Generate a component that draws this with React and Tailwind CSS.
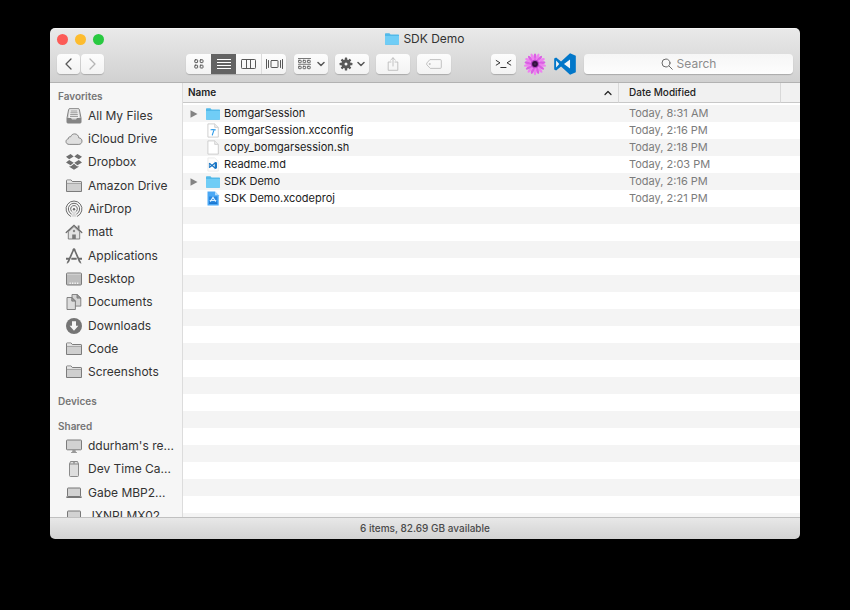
import { useState } from 'react';
import clsx from 'clsx';

const stroke = {
  fill: 'none',
  stroke: 'currentColor',
  strokeLinecap: 'round',
  strokeLinejoin: 'round',
};

function FolderLineIcon() {
  return (
    <svg viewBox="0 0 18 18" className="w-[18px] h-[18px]">
      <path d="M1.5 14.5V3.6q0-.6.6-.6h4l1.2 1.5h8.6q.6 0 .6.6v9.4z" fill="#cfcfcf" stroke="#7c7c7c" strokeLinejoin="round" />
      <path d="M1.5 6.3h15" stroke="#8f8f8f" strokeWidth="0.8" />
      <path d="M2 5.8V3.5h4l1 1.5h9v.8z" fill="#e6e6e6" />
    </svg>
  );
}

function AllFilesIcon() {
  return (
    <svg viewBox="0 0 18 18" className="w-[18px] h-[18px]">
      <path d="M4.2 1.7h9.6l.6 1 1.6 8.3v4.2q0 .8-.8.8H2.8q-.8 0-.8-.8V11l1.6-8.3z" fill="#d6d6d6" stroke="#777" strokeWidth="0.9" />
      <path d="M4.7 2.4h8.6l.8 8.4H3.9z" fill="#f3f3f3" />
      <path d="M5.6 4h6.8M5.4 5.8h7.2M5.2 7.6h7.6M5 9.4h8" stroke="#8a8a8a" strokeWidth="0.9" />
      <path d="M2 11h4l1 1.6h4l1-1.6h4v4.2q0 .8-.8.8H2.8q-.8 0-.8-.8z" fill="#858585" />
    </svg>
  );
}

function CloudIcon() {
  return (
    <svg viewBox="0 0 18 18" className="w-[18px] h-[18px]">
      <path d="M4.2 14.4C2.3 14.4 1 13.2 1 11.6c0-1.500 1-2.500 2.300-2.700C3.200 7.400 4.300 6.500 5.600 6.800 6.300 4.900 7.800 3.900 9.600 3.900c2.400 0 4 1.700 4.200 4 1.900 0 3.200 1.400 3.200 3.200 0 1.900-1.300 3.300-3.200 3.300z" fill="#dfdfdf" stroke="#7c7c7c" strokeWidth="0.9" />
    </svg>
  );
}

function DropboxIcon() {
  return (
    <svg viewBox="0 0 18 18" className="w-[18px] h-[18px]" fill="#6e6e6e">
      <path d="M5.600 1 8.700 3.500 4.200 6.300 1 3.800z M12.400 1 17 3.800 13.800 6.300 9.300 3.500z" />
      <path d="M1 9.500 4.200 7 8.700 9.800 5.600 12.300z M17 9.500 13.800 7 9.300 9.800l3.100 2.500z" />
      <path d="M4.600 12.700l1.100.7L9 10.800l3.300 2.600 1.100-.7v1.200L9 16.700l-4.400-2.800z" />
    </svg>
  );
}

function AirDropIcon() {
  return (
    <svg viewBox="0 0 18 18" className="w-[18px] h-[18px]" fill="none" stroke="#6c6c6c" strokeLinecap="round">
      <path d="M5.600 16.300a8 8 0 1 1 6.800 0" strokeWidth="1" />
      <path d="M6.300 14a5.700 5.700 0 1 1 5.400 0" strokeWidth="1" />
      <path d="M7.100 11.800a3.400 3.400 0 1 1 3.800 0" strokeWidth="1" />
      <circle cx="9" cy="9.200" r="1.200" fill="#6c6c6c" stroke="none" />
      <path d="M9 10.500 6.300 16.700h5.400z" fill="#d8d8d8" stroke="none" />
    </svg>
  );
}

function HouseIcon() {
  return (
    <svg viewBox="0 0 18 18" className="w-[18px] h-[18px]">
      <path d="M3.300 8.800V16h11.400V8.800L9 3.500z" fill="#e2e2e2" stroke="#777" strokeWidth="0.9" />
      <path d="M12.700 2.500h1.800v4.200l-1.800-1.600z" fill="#777" />
      <path d="M1.200 9.500 9 2.300l7.800 7.200" fill="none" stroke="#6c6c6c" strokeWidth="1.300" strokeLinecap="round" />
      <path d="M7.200 16v-4.500h3.600V16z" fill="#777" />
      <circle cx="9" cy="8" r="1.200" fill="#888" />
    </svg>
  );
}

function ApplicationsIcon() {
  return (
    <svg viewBox="0 0 18 18" className="w-[18px] h-[18px]" fill="none" stroke="#6c6c6c">
      <path d="M8.600 2.500 3 15.300M9.400 2.500 15 15.300" strokeWidth="1.700" />
      <path d="M1 11.800h3.300M6.300 11.800h5.400M13.700 11.800H17" strokeWidth="2" />
      <circle cx="9" cy="2.600" r="1.300" fill="#6c6c6c" stroke="none" />
      <path d="m2.600 14.600-.4 1.900M15.300 14.600l.6 1.900" strokeWidth="1" />
    </svg>
  );
}

function DesktopIcon() {
  return (
    <svg viewBox="0 0 18 18" className="w-[18px] h-[18px]">
      <rect x="1.500" y="3" width="15" height="12" rx="1" fill="#bdbdbd" stroke="#7c7c7c" />
      <path d="M2 4.200h14" stroke="#d8d8d8" strokeWidth="0.900" />
      <path d="M4.500 13.200h9.500" stroke="#f4f4f4" strokeWidth="1.500" strokeDasharray="1.300 1.200" />
    </svg>
  );
}

function DocumentsIcon() {
  return (
    <svg viewBox="0 0 18 18" className="w-[18px] h-[18px]" strokeWidth="0.900" strokeLinejoin="round">
      <path d="M7 1.500h5l3.800 3.600v8H7z" fill="#d4d4d4" stroke="#7c7c7c" />
      <path d="M12 1.500v3.600h3.800z" fill="#999" stroke="#7c7c7c" />
      <path d="M2 4.500h4.800l3.600 3.600v8.400H2z" fill="#dcdcdc" stroke="#777" />
      <path d="M6.800 4.500v3.600h3.600z" fill="#a0a0a0" stroke="#777" />
    </svg>
  );
}

function DownloadsIcon() {
  return (
    <svg viewBox="0 0 18 18" className="w-[18px] h-[18px]">
      <circle cx="9" cy="9" r="8" fill="#757575" />
      <path d="M7 4.300h4v4.500h2.400L9 13.700 4.600 8.800H7z" fill="#f6f6f6" />
    </svg>
  );
}

function DisplayIcon() {
  return (
    <svg viewBox="0 0 18 18" className="w-[18px] h-[18px]">
      <rect x="1.500" y="3" width="15" height="9.800" rx=".8" fill="#d2d2d2" stroke="#7c7c7c" />
      <path d="M7.500 13h3l.4 1.900h1V16H6.100v-1.100h1z" fill="#999" />
    </svg>
  );
}

function TimeCapsuleIcon() {
  return (
    <svg viewBox="0 0 18 18" className="w-[18px] h-[18px]">
      <path d="M4.500 4 5.500 1.500h7L13.500 4v11.500q0 1-1 1h-7q-1 0-1-1z" fill="#dedede" stroke="#808080" strokeWidth="0.900" />
      <path d="M4.500 4h9" stroke="#808080" strokeWidth="0.900" />
      <path d="M9 2v1.500" stroke="#666" />
    </svg>
  );
}

function LaptopIcon() {
  return (
    <svg viewBox="0 0 18 18" className="w-[18px] h-[18px]">
      <rect x="2.500" y="4" width="13" height="8.500" rx=".6" fill="#d2d2d2" stroke="#777" />
      <path d="M1.200 12.500h15.600v.8q0 .8-.8.800H2q-.8 0-.8-.8z" fill="#777" />
    </svg>
  );
}

function FolderIcon() {
  return (
    <svg viewBox="0 0 14 12" className="w-[14px] h-3 shrink-0">
      <path d="M0 1q0-.7.7-.7h3.700l1.200 1.100h7.700q.7 0 .7.700V11q0 .7-.7.700H.7Q0 11.700 0 11z" fill="#52b9e9" />
      <path d="M0 2.900h14V11q0 .6-.7.600H.7Q0 11.600 0 11z" fill="#70cdf6" />
    </svg>
  );
}

function FileIcon({ children }) {
  return (
    <svg viewBox="0 0 14 15" className="w-[14px] h-[15px] shrink-0">
      <path d="M1.900.9h6.800l3.600 3.500v9.700H1.900z" fill="#fff" stroke="#c4c4c4" strokeWidth="0.800" />
      <path d="M8.700.9v3.500h3.600" fill="#eee" stroke="#ccc" strokeWidth="0.800" />
      {children}
    </svg>
  );
}

function ConfigFileIcon() {
  return (
    <FileIcon>
      <path d="M5 6.800q1.700-.4 4.300.1M8 6.900 6.300 12" fill="none" stroke="#2f9be8" strokeWidth="1.100" strokeLinecap="round" />
    </FileIcon>
  );
}

function CodeFileIcon() {
  return (
    <svg viewBox="0 0 14 15" className="w-[14px] h-[15px] shrink-0">
      <path d="M1.900.9h6.800l3.600 3.500v9.700H1.900z" fill="#fdfdfd" stroke="#e8e8e8" strokeWidth="0.800" />
      <path d="m3.300 6.300 5.800 4.600M3.300 10.500l5.800-4.600" stroke="#1a76c4" strokeWidth="1.300" />
      <path d="M3.400 6v4.800" stroke="#1a76c4" strokeWidth="0.800" />
      <path d="m8.700 4.700 2.300.9v5.700l-2.300.9z" fill="#1a76c4" />
    </svg>
  );
}

function ProjectFileIcon() {
  return (
    <svg viewBox="0 0 14 15" className="w-[14px] h-[15px] shrink-0">
      <path d="M1.500.5H9L12.700 4.200V14.500H1.500z" fill="#4aa8f5" />
      <path d="M9 .5v3.700h3.700z" fill="#b5dcfb" />
      <path d="M3 5.500h8.200v7.500H3z" fill="#2a88e0" />
      <path d="M4.300 10.600 7 6.200l2.700 4.400M3.700 9.500h6.600" fill="none" stroke="#d8efff" strokeWidth="1.100" />
      <path d="M3 11.500h8.200V13H3z" fill="#1c78d0" />
    </svg>
  );
}

function CodeEditorLogo() {
  return (
    <svg viewBox="0 0 24 24" className="w-[22px] h-[22px]">
      <path d="M17.500.3 7.700 9.200 2.300 5 .2 6v12l2.100 1 5.400-4.200 9.800 8.900 6.300-2.600V2.900z" fill="#0277c9" />
      <path d="M2.300 8.300v7.400L5.700 12zM17.500 7v10l-6.600-5z" fill="#f4f6f8" />
    </svg>
  );
}

function FlowerIcon() {
  const petals = Array.from({ length: 18 }, (_, i) => i * 20);
  return (
    <svg viewBox="-12 -12 24 24" className="w-6 h-6">
      {petals.map((angle, i) => (
        <ellipse
          key={angle}
          cx="0"
          cy={i % 2 ? -7 : -6.300}
          rx="1.400"
          ry="4.200"
          fill={i % 2 ? '#ee82f0' : '#da5fe4'}
          transform={`rotate(${angle})`}
        />
      ))}
      <circle r="4.200" fill="#b445c4" />
      <circle r="2.900" fill="#32103f" />
      <circle r="1" fill="#4d2358" />
    </svg>
  );
}

function ChevronDown() {
  return (
    <svg viewBox="0 0 8 6" className="w-2 h-[6px]" {...stroke} strokeWidth="1.500">
      <path d="m1 1.500 3 3 3-3" />
    </svg>
  );
}

function GridIcon() {
  return (
    <svg viewBox="0 0 10 10" className="w-[10px] h-[10px]" {...stroke}>
      {[0.8, 6.2].map(x => [0.8, 6.2].map(y => (
        <rect key={`${x}-${y}`} x={x} y={y} width="2.800" height="2.800" rx=".5" />
      )))}
    </svg>
  );
}

function ListIcon() {
  return (
    <svg viewBox="0 0 14 10" className="w-[14px] h-[10px]" stroke="currentColor">
      <path d="M0 .5h14M0 3.500h14M0 6.500h14M0 9.500h14" />
    </svg>
  );
}

function ColumnsIcon() {
  return (
    <svg viewBox="0 0 15 10" className="w-[15px] h-[10px]" {...stroke}>
      <rect x=".5" y=".5" width="14" height="9" rx=".8" />
      <path d="M5.500.5v9M9.500.5v9" />
    </svg>
  );
}

function CoverFlowIcon() {
  return (
    <svg viewBox="0 0 17 10" className="w-[17px] h-[10px]" {...stroke}>
      <rect x="5" y="1.500" width="7" height="7" rx=".5" />
      <path d="M.5.500v9M2.500 1.500v7M14.500 1.500v7M16.500.500v9" />
    </svg>
  );
}

function ArrangeIcon() {
  return (
    <svg viewBox="0 0 13 12" className="w-[13px] h-3" {...stroke} strokeWidth="0.900">
      <path d="M0 .5h13M0 6.300h13" strokeWidth="0.800" />
      {[0.6, 5.1, 9.6].map(x => [2.3, 8.300].map(y => (
        <rect key={`${x}-${y}`} x={x} y={y} width="2.600" height="2.400" rx=".4" />
      )))}
    </svg>
  );
}

function GearIcon() {
  return (
    <svg viewBox="-7 -7 14 14" className="w-[14px] h-[14px]">
      {[0, 45, 90, 135].map(a => (
        <rect key={a} x="-1.200" y="-6.400" width="2.400" height="12.800" rx=".5" fill="currentColor" transform={`rotate(${a})`} />
      ))}
      <circle r="3.300" fill="none" stroke="currentColor" strokeWidth="2.600" />
      <circle r="1.500" fill="#f8f8f8" />
    </svg>
  );
}

function ShareIcon() {
  return (
    <svg viewBox="0 0 12 14" className="w-3 h-[14px]" {...stroke} strokeWidth="0.900">
      <path d="M4 5H1.200v8.300h9.600V5H8M6 9V.8M3.700 3 6 .8 8.300 3" />
    </svg>
  );
}

function TagIcon() {
  return (
    <svg viewBox="0 0 16 10" className="w-4 h-[10px]" {...stroke} strokeWidth="0.900">
      <path d="M4.300.6h10q1 0 1 1v6.800q0 1-1 1h-10L.8 5.800q-.5-.8 0-1.600z" />
      <circle cx="3.600" cy="5" r=".5" />
    </svg>
  );
}

const favorites = [
  { name: 'All My Files', icon: AllFilesIcon },
  { name: 'iCloud Drive', icon: CloudIcon },
  { name: 'Dropbox', icon: DropboxIcon },
  { name: 'Amazon Drive', icon: FolderLineIcon },
  { name: 'AirDrop', icon: AirDropIcon },
  { name: 'matt', icon: HouseIcon },
  { name: 'Applications', icon: ApplicationsIcon },
  { name: 'Desktop', icon: DesktopIcon },
  { name: 'Documents', icon: DocumentsIcon },
  { name: 'Downloads', icon: DownloadsIcon },
  { name: 'Code', icon: FolderLineIcon },
  { name: 'Screenshots', icon: FolderLineIcon },
];

const shared = [
  { name: "ddurham's re...", icon: DisplayIcon },
  { name: 'Dev Time Ca...', icon: TimeCapsuleIcon },
  { name: 'Gabe MBP2...', icon: LaptopIcon },
  { name: 'JXNPLMX02', icon: LaptopIcon },
];

const files = [
  { name: 'BomgarSession', date: 'Today, 8:31 AM', icon: FolderIcon, folder: true },
  { name: 'BomgarSession.xcconfig', date: 'Today, 2:16 PM', icon: ConfigFileIcon },
  { name: 'copy_bomgarsession.sh', date: 'Today, 2:18 PM', icon: FileIcon },
  { name: 'Readme.md', date: 'Today, 2:03 PM', icon: CodeFileIcon },
  { name: 'SDK Demo', date: 'Today, 2:16 PM', icon: FolderIcon, folder: true },
  { name: 'SDK Demo.xcodeproj', date: 'Today, 2:21 PM', icon: ProjectFileIcon },
];

const views = [
  { name: 'Icons', icon: GridIcon },
  { name: 'List', icon: ListIcon },
  { name: 'Columns', icon: ColumnsIcon },
  { name: 'Cover Flow', icon: CoverFlowIcon },
];

function ToolButton({ label, className, children, ...props }) {
  return (
    <button
      type="button"
      aria-label={label}
      className={clsx('h-5 flex items-center justify-center rounded-[4px] bg-gradient-to-b from-[#fdfdfd] to-[#f3f3f3] shadow-[0_1px_1px_rgba(0,0,0,0.2)]', className)}
      {...props}
    >
      {children}
    </button>
  );
}

function Toolbar() {
  const [view, setView] = useState('List');

  return (
    <div className="h-[30px] flex items-center pl-[7px] pr-[7px] text-[#585858]">
      <div className="flex gap-px">
        <ToolButton label="Back" className="w-[23px]">
          <svg viewBox="0 0 7 12" className="w-[7px] h-3" {...stroke} strokeWidth="1.300"><path d="M6 1 1 6l5 5" /></svg>
        </ToolButton>
        <ToolButton label="Forward" className="w-[23px] text-[#b5b5b5]">
          <svg viewBox="0 0 7 12" className="w-[7px] h-3" {...stroke} strokeWidth="1.300"><path d="m1 1 5 5-5 5" /></svg>
        </ToolButton>
      </div>

      <div className="ml-[82px] flex items-center rounded-[4px] shadow-[0_1px_1px_rgba(0,0,0,0.2)]">
        {views.map(({ name, icon: Icon }, i) => (
          <button
            key={name}
            type="button"
            aria-label={name}
            onClick={() => setView(name)}
            className={clsx(
              'h-5 w-[25px] flex items-center justify-center',
              i === 0 && 'rounded-l-[4px]',
              i === 3 && 'rounded-r-[4px] border-l border-[#dcdcdc]',
              view === name ? 'bg-[#636363] text-white' : 'bg-gradient-to-b from-[#fdfdfd] to-[#f3f3f3]'
            )}
          >
            <Icon />
          </button>
        ))}
      </div>

      <div className="ml-2 flex gap-[7px]">
        <ToolButton label="Arrange" className="w-[34px] gap-[6px]"><ArrangeIcon /><ChevronDown /></ToolButton>
        <ToolButton label="Actions" className="w-[34px] gap-1"><GearIcon /><ChevronDown /></ToolButton>
        <ToolButton label="Share" className="w-[34px] text-[#bbb]"><ShareIcon /></ToolButton>
        <ToolButton label="Edit Tags" className="w-[34px] text-[#bbb]"><TagIcon /></ToolButton>
      </div>

      <div className="ml-10 flex items-center gap-[7px]">
        <ToolButton label="Open Terminal" className="w-[25px] text-[#333]">
          <svg viewBox="0 0 17 10" className="w-[17px] h-[10px]" {...stroke} strokeWidth="1">
            <path d="m1.200 1.500 3.800 2.300-3.800 2.300M15.800 1.500 12 3.800l3.800 2.300M5.800 8.500h5.200" />
          </svg>
        </ToolButton>
        <button type="button" aria-label="Open Flower"><FlowerIcon /></button>
        <button type="button" aria-label="Open Code Editor"><CodeEditorLogo /></button>
      </div>

      <label className="ml-2 flex-1 h-5 flex items-center justify-center gap-1 rounded-[4px] bg-gradient-to-b from-[#f6f6f6] to-[#fdfdfd] shadow-[0_1px_1px_rgba(0,0,0,0.2)] cursor-text">
        <svg viewBox="0 0 12 12" className="w-3 h-3 text-[#6a6a6a]" {...stroke}>
          <circle cx="5" cy="5" r="4" />
          <path d="m8 8 3.300 3.300" />
        </svg>
        <input
          type="text"
          aria-label="Search"
          placeholder="Search"
          className="field-sizing-content text-xs leading-4 text-[#333] placeholder:text-[#8c8c8c] outline-none"
        />
      </label>
    </div>
  );
}

function SidebarList({ items, className }) {
  return (
    <ul className={clsx('grid auto-rows-fr shrink-0', className)}>
      {items.map(({ name, icon: Icon }) => (
        <li key={name} className="flex items-center">
          <a href="#" className="flex items-center gap-[5px] pl-[15px] whitespace-nowrap">
            <Icon />
            {name}
          </a>
        </li>
      ))}
    </ul>
  );
}

function Sidebar() {
  const heading = 'pl-2 text-[10px] leading-4 font-semibold text-[#757575]';

  return (
    <nav className="w-[133px] shrink-0 h-full overflow-hidden flex flex-col bg-[#f6f6f6] border-r border-[#dcdcdc] pt-[5px] text-xs text-[#333]">
      <h2 className={heading}>Favorites</h2>
      <SidebarList items={favorites} className="h-[280px]" />
      <h2 className={clsx(heading, 'mt-[9px]')}>Devices</h2>
      <h2 className={clsx(heading, 'mt-[9px]')}>Shared</h2>
      <SidebarList items={shared} className="h-[94px]" />
    </nav>
  );
}

function FileTable() {
  const emptyRows = Array.from({ length: 19 });

  return (
    <div className="flex-1 min-w-0 h-full overflow-hidden bg-white">
      <table className="w-full table-fixed border-separate border-spacing-0 text-[11px]">
        <colgroup>
          <col />
          <col className="w-[162px]" />
          <col className="w-[19px]" />
        </colgroup>
        <thead>
          <tr className="h-5 bg-[#f1f1f1] text-left text-[10px] text-[#222]">
            <th className="p-0 border-b border-r border-b-[#c8c8c8] border-r-[#d8d8d8] font-semibold">
              <button type="button" className="w-full flex items-center justify-between pl-[5px] pr-[6px]">
                Name
                <svg viewBox="0 0 8 6" className="w-2 h-[6px]" {...stroke} strokeWidth="1.200"><path d="m1 4.500 3-3 3 3" /></svg>
              </button>
            </th>
            <th className="p-0 border-b border-r border-b-[#c8c8c8] border-r-[#d8d8d8] font-medium">
              <button type="button" className="pl-[10px]">Date Modified</button>
            </th>
            <td className="p-0 border-b border-[#c8c8c8]" />
          </tr>
        </thead>
        <tbody className="before:block before:h-[2px]">
          {files.map(({ name, date, icon: Icon, folder }) => (
            <tr key={name} className="h-[17px] odd:bg-[#f4f4f4]">
              <td className="p-0">
                <div className="h-[17px] flex items-center pl-[7px] text-[#1c1c1c]">
                  <div className="w-4 flex">
                    {folder && (
                      <button type="button" aria-label={`Expand ${name}`}>
                        <svg viewBox="0 0 8 8" className="w-2 h-2"><path d="M.5.200 7.500 4 .5 7.800z" fill="#838383" /></svg>
                      </button>
                    )}
                  </div>
                  <Icon />
                  <span className="ml-1 truncate">{name}</span>
                </div>
              </td>
              <td className="p-0 pl-[10px] text-[#7c7c7c]">{date}</td>
              <td className="p-0" />
            </tr>
          ))}
          {emptyRows.map((_, i) => (
            <tr key={i} className="h-[17px] odd:bg-[#f4f4f4]">
              <td className="p-0" colSpan={3} />
            </tr>
          ))}
        </tbody>
      </table>
    </div>
  );
}

export default function App() {
  return (
    <div className="h-screen bg-black px-[50px] pt-7 pb-[71px] font-['Inter','Liberation_Sans',sans-serif]">
      <div className="h-full flex flex-col rounded-[5px] overflow-hidden">
        <header className="shrink-0 bg-gradient-to-b from-[#e9e9e9] to-[#d1d1d1] border-t border-t-[#f5f5f5] border-b border-b-[#b2b2b2] pb-[3px]">
          <div className="h-5 px-[7px] grid grid-cols-[1fr_auto_1fr] items-center">
            <div className="flex gap-[7px]">
              <button type="button" aria-label="Close" className="w-[11px] h-[11px] rounded-full bg-[#fc5b57]" />
              <button type="button" aria-label="Minimize" className="w-[11px] h-[11px] rounded-full bg-[#fdbc2e]" />
              <button type="button" aria-label="Zoom" className="w-[11px] h-[11px] rounded-full bg-[#28c940]" />
            </div>
            <h1 className="flex items-center gap-1 text-xs text-[#333]">
              <FolderIcon />
              SDK Demo
            </h1>
          </div>
          <Toolbar />
        </header>

        <main className="flex-1 min-h-0 flex">
          <Sidebar />
          <FileTable />
        </main>

        <footer className="h-[22px] shrink-0 flex items-center justify-center border-t border-[#c0c0c0] bg-gradient-to-b from-[#e8e8e8] to-[#d2d2d2] text-[10px] font-medium text-[#4a4a4a]">
          6 items, 82.69 GB available
        </footer>
      </div>
    </div>
  );
}
